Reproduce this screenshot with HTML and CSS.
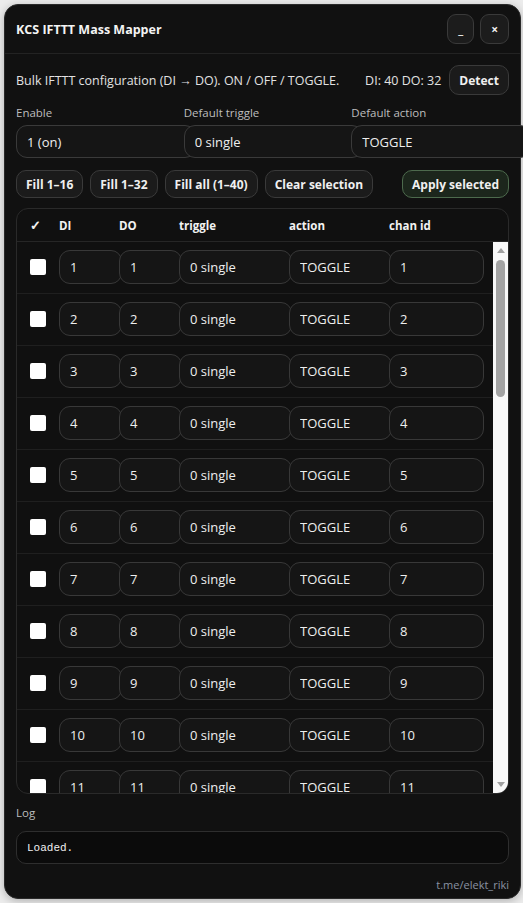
FILE: index.html
```html
<!DOCTYPE html>
<html lang="en">
<head>
<meta charset="utf-8">
<title>KCS IFTTT Mass Mapper</title>
<link rel="stylesheet" href="styles.css">
</head>
<body>
<div class="panel">
  <header class="head">
    <div class="title">KCS IFTTT Mass Mapper</div>
    <div class="win-btns">
      <button class="icon-btn">_</button>
      <button class="icon-btn close">×</button>
    </div>
  </header>
  <div class="content">
    <div class="intro">
      <span class="desc">Bulk IFTTT configuration (DI → DO). ON / OFF / TOGGLE.</span>
      <span class="counts">DI: 40 DO: 32</span>
      <button class="btn">Detect</button>
    </div>
    <div class="defaults">
      <label class="field"><span class="lbl">Enable</span><select class="ctl"><option>1 (on)</option></select></label>
      <label class="field"><span class="lbl">Default triggle</span><select class="ctl"><option>0 single</option></select></label>
      <label class="field"><span class="lbl">Default action</span><select class="ctl"><option>TOGGLE</option></select></label>
    </div>
    <div class="actions">
      <button class="btn sm">Fill 1–16</button>
      <button class="btn sm">Fill 1–32</button>
      <button class="btn sm">Fill all (1–40)</button>
      <button class="btn sm">Clear selection</button>
      <button class="btn sm primary">Apply selected</button>
    </div>
    <div class="table">
      <div class="thead">
        <span class="th-check">✓</span>
        <span>DI</span>
        <span>DO</span>
        <span>triggle</span>
        <span>action</span>
        <span>chan id</span>
      </div>
      <div class="tbody">
        <div class="rows" id="rows"></div>
        <div class="sbar">
          <span class="arrow up"></span>
          <span class="thumb"></span>
          <span class="sbar-fill"></span>
          <span class="arrow down"></span>
        </div>
      </div>
    </div>
    <div class="lbl log-lbl">Log</div>
    <div class="log">Loaded.</div>
    <div class="footer">t.me/elekt_riki</div>
  </div>
</div>
<script src="script.js"></script>
</body>
</html>
```
FILE: styles.css
```css
html, body {
  margin: 0;
  height: 100%;
  overflow: hidden;
}
body {
  background: #ececec;
  padding: 4px;
  box-sizing: border-box;
  font-family: "Open Sans", "Noto Sans", sans-serif;
  color: #e8e8e8;
}
.panel {
  width: 517px;
  height: 895px;
  box-sizing: border-box;
  background: #111111;
  border: 1px solid #2a2a2a;
  border-radius: 14px;
  display: flex;
  flex-direction: column;
  box-shadow: 0 2px 8px rgba(0, 0, 0, 0.25);
}
.head {
  display: flex;
  align-items: center;
  justify-content: space-between;
  padding: 9px 11px;
  border-bottom: 1px solid #232323;
}
.title {
  font-weight: 700;
  font-size: 12.5px;
  color: #f4f4f4;
}
.win-btns {
  display: flex;
  gap: 6px;
}
.icon-btn {
  height: 30px;
  padding: 0 10px;
  border-radius: 9px;
  background: #1c1c1c;
  border: 1px solid #3a3a3a;
  color: #f0f0f0;
  font: 700 12px "Open Sans", sans-serif;
}
.content {
  padding: 11px 11px 0;
  display: flex;
  flex-direction: column;
}
.intro {
  display: flex;
  align-items: center;
  height: 30px;
  font-size: 12.5px;
}
.desc {
  flex: 1;
  color: #e2e2e2;
}
.counts {
  margin-right: 8px;
  color: #e2e2e2;
}
.btn {
  height: 30px;
  padding: 0 9px;
  border-radius: 10px;
  background: #1b1b1b;
  border: 1px solid #3a3a3a;
  color: #f0f0f0;
  font: 700 12px "Open Sans", sans-serif;
}
.btn.sm {
  height: 28px;
}
.btn.primary {
  margin-left: auto;
  border-color: #4d6a4d;
  background: #1c261c;
}
.defaults {
  display: grid;
  grid-template-columns: repeat(3, 1fr);
  gap: 10px;
  margin-top: 10px;
}
.field {
  display: flex;
  flex-direction: column;
  gap: 5px;
  min-width: 0;
}
.lbl {
  font-size: 11.5px;
  color: #bdbdbd;
  line-height: 15px;
}
.ctl {
  appearance: none;
  width: calc(100% + 22px);
  height: 33px;
  box-sizing: border-box;
  background: #151515;
  border: 1px solid #3a3a3a;
  border-radius: 11px;
  color: #eeeeee;
  padding: 0 10px;
  font: 13px "Open Sans", sans-serif;
}
.actions {
  display: flex;
  gap: 7px;
  margin-top: 12px;
}
.table {
  margin-top: 10px;
  height: 586px;
  box-sizing: border-box;
  border: 1px solid #2a2a2a;
  border-radius: 12px;
  overflow: hidden;
  display: flex;
  flex-direction: column;
  background: #101010;
}
.thead,
.row {
  display: grid;
  grid-template-columns: 42px 60px 60px 110px 100px 1fr;
  align-items: center;
}
.thead {
  height: 32px;
  flex: none;
  border-bottom: 1px solid #262626;
  font-weight: 700;
  font-size: 11.5px;
  color: #f2f2f2;
}
.th-check {
  padding-left: 13px;
  font-size: 13px;
}
.tbody {
  flex: 1;
  min-height: 0;
  display: flex;
}
.rows {
  flex: 1;
  min-width: 0;
  overflow: hidden;
}
.row {
  padding: 8px 12px 9px 0;
  border-bottom: 1px solid #1f1f1f;
}
.chk {
  appearance: none;
  width: 16px;
  height: 16px;
  margin: 0;
  background: #ffffff;
  border-radius: 2px;
  justify-self: center;
}
.cell {
  appearance: none;
  width: calc(100% + 3px);
  height: 34px;
  box-sizing: border-box;
  background: #151515;
  border: 1px solid #383838;
  border-radius: 11px;
  color: #eeeeee;
  padding: 0 10px;
  font: 13px "Open Sans", sans-serif;
  min-width: 0;
}
.sbar {
  width: 15px;
  flex: none;
  background: #f8f8f8;
  display: flex;
  flex-direction: column;
  align-items: center;
  padding: 6px 0;
  box-sizing: border-box;
}
.arrow {
  width: 0;
  height: 0;
  border-left: 4px solid transparent;
  border-right: 4px solid transparent;
}
.arrow.up {
  border-bottom: 5px solid #a0a0a0;
}
.arrow.down {
  border-top: 5px solid #a0a0a0;
}
.thumb {
  margin-top: 7px;
  width: 9px;
  height: 137px;
  border-radius: 5px;
  background: #a3a3a3;
}
.sbar-fill {
  flex: 1;
}
.log-lbl {
  margin-top: 11px;
}
.log {
  margin-top: 11px;
  height: 33px;
  box-sizing: border-box;
  border: 1px solid #2e2e2e;
  border-radius: 10px;
  background: #0b0b0b;
  font: 11px "Liberation Mono", monospace;
  color: #f0f0f0;
  padding: 0 10px;
  display: flex;
  align-items: center;
}
.footer {
  margin-top: 13px;
  text-align: right;
  font-size: 11px;
  color: #8a92a2;
}
```
FILE: script.js
```js
var tb = document.getElementById('rows');
var html = '';
for (var i = 1; i <= 40; i++) {
  html += '<div class="row">' +
    '<input type="checkbox" class="chk">' +
    '<input class="cell" value="' + i + '">' +
    '<input class="cell" value="' + i + '">' +
    '<select class="cell"><option>0 single</option></select>' +
    '<select class="cell"><option>TOGGLE</option></select>' +
    '<input class="cell" value="' + i + '">' +
    '</div>';
}
tb.innerHTML = html;
```
